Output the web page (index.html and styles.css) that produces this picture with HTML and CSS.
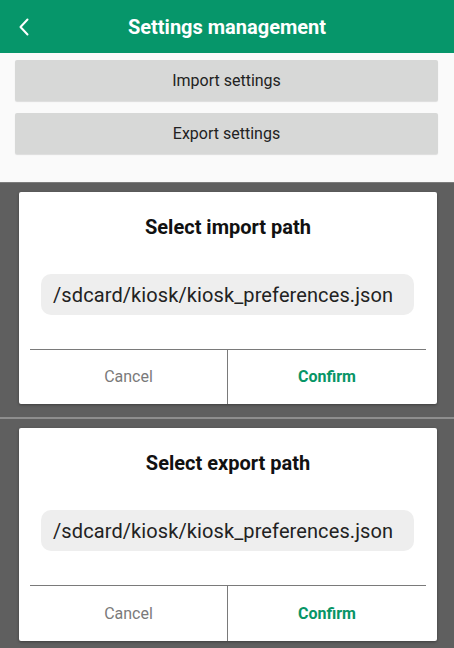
FILE: index.html
```html
<!DOCTYPE html>
<html>
<head>
<meta charset="utf-8">
<link rel="stylesheet" href="styles.css">
</head>
<body>
<div class="app">
  <header class="topbar">
    <span class="back">
      <svg width="12" height="18" viewBox="0 0 12 18"><path d="M9.5 1.5 L2.5 9 L9.5 16.5" fill="none" stroke="#fff" stroke-width="2" stroke-linecap="round" stroke-linejoin="round"/></svg>
    </span>
    <h1 class="title">Settings management</h1>
  </header>
  <section class="actions">
    <div class="btn">Import settings</div>
    <div class="btn">Export settings</div>
  </section>
  <section class="panel panel-first">
    <div class="dialog">
      <div class="dlg-title">Select import path</div>
      <div class="path">/sdcard/kiosk/kiosk_preferences.json</div>
      <div class="dlg-actions">
        <div class="dlg-btn cancel">Cancel</div>
        <div class="dlg-btn confirm">Confirm</div>
      </div>
    </div>
  </section>
  <section class="panel panel-second">
    <div class="dialog">
      <div class="dlg-title">Select export path</div>
      <div class="path">/sdcard/kiosk/kiosk_preferences.json</div>
      <div class="dlg-actions">
        <div class="dlg-btn cancel">Cancel</div>
        <div class="dlg-btn confirm">Confirm</div>
      </div>
    </div>
  </section>
</div>
</body>
</html>
```
FILE: styles.css
```css
html, body {
  margin: 0;
  padding: 0;
}
body {
  width: 454px;
  height: 648px;
  overflow: hidden;
  background: #5f5f5f;
  font-family: Roboto, "Liberation Sans", sans-serif;
}
.app {
  display: flex;
  flex-direction: column;
  height: 648px;
}
.topbar {
  height: 53px;
  background: #06966a;
  display: flex;
  align-items: center;
  justify-content: center;
  position: relative;
}
.back {
  position: absolute;
  left: 18px;
  top: 18px;
  width: 12px;
  height: 18px;
  display: flex;
}
.title {
  margin: 0;
  color: #fff;
  font-size: 20px;
  font-weight: 700;
  line-height: 24px;
  margin-top: 1px;
}
.actions {
  background: #fafafa;
  height: 129px;
  padding: 7px 16px 0 15px;
  box-sizing: border-box;
  display: flex;
  flex-direction: column;
  gap: 12px;
}
.btn {
  height: 41px;
  background: #d7d8d7;
  border-radius: 2px;
  box-shadow: 0 1px 1px rgba(0,0,0,0.12);
  display: flex;
  align-items: center;
  justify-content: center;
  font-size: 16px;
  color: #222;
}
.panel {
  background: #5f5f5f;
  box-sizing: border-box;
  padding: 9px 17px 0 19px;
  border-top: 1px solid #7c7c7c;
}
.panel-first {
  height: 235px;
}
.panel-second {
  flex: 1;
  border-top: 2px solid #8e8e8e;
}
.dialog {
  background: #fff;
  border-radius: 2px;
  box-shadow: 0 1px 3px rgba(0,0,0,0.35);
  display: flex;
  flex-direction: column;
  height: 212px;
}
.panel-second .dialog {
  height: 213px;
}
.dlg-title {
  padding-top: 23px;
  line-height: 24px;
  text-align: center;
  font-size: 20px;
  font-weight: 700;
  color: #111;
}
.path {
  margin: 35px 23px 0 22px;
  height: 41px;
  background: #eeeeee;
  border-radius: 10px;
  display: flex;
  align-items: center;
  padding-left: 12px;
  font-size: 20px;
  letter-spacing: 0.1px;
  color: #222;
}
.dlg-actions {
  margin: 34px 11px 0 11px;
  border-top: 1px solid #7a7a7a;
  flex: 1;
  display: grid;
  grid-template-columns: 1fr 1fr;
}
.dlg-btn {
  display: flex;
  align-items: center;
  justify-content: center;
  font-size: 16px;
  padding-bottom: 1px;
}
.cancel {
  color: #7a7a7a;
  border-right: 1px solid #7a7a7a;
}
.confirm {
  color: #079566;
  font-weight: 700;
}
```
